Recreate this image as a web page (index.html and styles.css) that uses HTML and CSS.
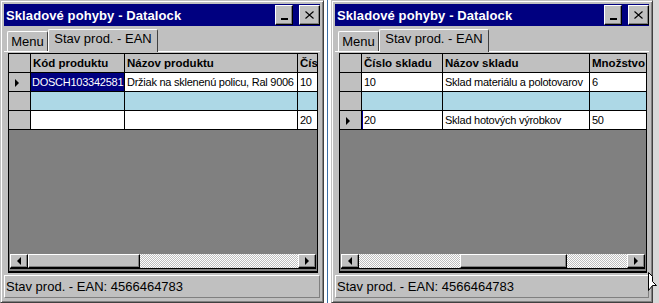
FILE: index.html
```html
<!DOCTYPE html>
<html lang="sk">
<head>
<meta charset="utf-8">
<link rel="stylesheet" href="styles.css">
</head>
<body>

<div class="desk">

<div class="win">
    <div class="title">
        <span class="caption">Skladové pohyby - Datalock</span>
        <div class="tbtn min"><span class="bar"></span></div>
        <div class="tbtn close">
            <svg width="9" height="8" viewBox="0 0 9 8"><path d="M0.5 0.5 L8.5 7.5 M8.5 0.5 L0.5 7.5" stroke="#000" stroke-width="1.1" fill="none"/></svg>
        </div>
    </div>
    <div class="tabs">
        <div class="tab menu">Menu</div>
        <div class="tab active">Stav prod. - EAN</div>
    </div>
    <div class="pane">
        <div class="grid">
            <div class="row head">
                <div class="cell rh"></div>
                <div class="cell w94">Kód produktu</div>
                <div class="cell w173">Názov produktu</div>
                <div class="cell w60">Číslo skladu</div>
            </div>
            <div class="row">
                <div class="cell rh"><span class="arrow"></span></div>
                <div class="cell w94 sel">DOSCH103342581</div>
                <div class="cell w173">Držiak na sklenenú policu, Ral 9006</div>
                <div class="cell w60">10</div>
            </div>
            <div class="row alt">
                <div class="cell rh"></div>
                <div class="cell w94"></div>
                <div class="cell w173"></div>
                <div class="cell w60"></div>
            </div>
            <div class="row">
                <div class="cell rh"></div>
                <div class="cell w94"></div>
                <div class="cell w173"></div>
                <div class="cell w60">20</div>
            </div>
            <div class="fill"></div>
            <div class="hscroll">
                <div class="sbtn"><span class="tri left"></span></div>
                <div class="thumb t1"></div>
                <div class="track"></div>
                <div class="sbtn"><span class="tri right"></span></div>
            </div>
        </div>
    </div>
    <div class="status">Stav prod. - EAN: 4566464783</div>
</div>

<div class="sep"></div>

<div class="win narrow">
    <div class="title">
        <span class="caption">Skladové pohyby - Datalock</span>
        <div class="tbtn min"><span class="bar"></span></div>
        <div class="tbtn close">
            <svg width="9" height="8" viewBox="0 0 9 8"><path d="M0.5 0.5 L8.5 7.5 M8.5 0.5 L0.5 7.5" stroke="#000" stroke-width="1.1" fill="none"/></svg>
        </div>
    </div>
    <div class="tabs">
        <div class="tab menu">Menu</div>
        <div class="tab active">Stav prod. - EAN</div>
    </div>
    <div class="pane">
        <div class="grid">
            <div class="row head">
                <div class="cell rh"></div>
                <div class="cell w81">Číslo skladu</div>
                <div class="cell w147">Názov skladu</div>
                <div class="cell w60">Množstvo</div>
            </div>
            <div class="row">
                <div class="cell rh"></div>
                <div class="cell w81">10</div>
                <div class="cell w147">Sklad materiálu a polotovarov</div>
                <div class="cell w60">6</div>
            </div>
            <div class="row alt">
                <div class="cell rh"></div>
                <div class="cell w81"></div>
                <div class="cell w147"></div>
                <div class="cell w60"></div>
            </div>
            <div class="row">
                <div class="cell rh"><span class="arrow"></span></div>
                <div class="cell w81 caret">20</div>
                <div class="cell w147">Sklad hotových výrobkov</div>
                <div class="cell w60">50</div>
            </div>
            <div class="fill"></div>
            <div class="hscroll">
                <div class="sbtn"><span class="tri left"></span></div>
                <div class="track t2a"></div>
                <div class="thumb t2"></div>
                <div class="track"></div>
                <div class="sbtn"><span class="tri right"></span></div>
            </div>
        </div>
    </div>
    <div class="status">Stav prod. - EAN: 4566464783</div>
</div>

<div class="edge"></div>

</div>

<svg class="cursor" width="10" height="20" viewBox="0 0 10 20">
    <path d="M0.5 0.5 L4.5 4.5 L4.5 9.5 L8.5 13.5 L4.5 13.5 L0.5 18.5 Z" fill="#fff" stroke="#000" stroke-width="1"/>
</svg>

</body>
</html>
```

FILE: styles.css
```css
body
{
margin: 0;
background: #ffffff;
font-family: "Liberation Sans", Arial, sans-serif;
overflow: hidden;
}

.desk
{
display: flex;
height: 303px;
}

.sep
{
width: 7px;
flex: none;
background: linear-gradient(to right, #ffffff 3px, #3a6ea5 3px, #3a6ea5 4px, #ffffff 4px);
}

.edge
{
flex: 1;
background: #d8d8d8;
}

.win
{
width: 324px;
height: 303px;
flex: none;
box-sizing: border-box;
border: 1px solid #c0c0c0;
border-right-color: #404040;
border-bottom-color: #404040;
box-shadow: inset 1px 1px #ffffff, inset -1px -1px #808080;
padding: 3px 3px 4px 3px;
background: #c0c0c0;
display: flex;
flex-direction: column;
}

.win.narrow
{
width: 322px;
}

/* title bar */
.title
{
height: 22px;
flex: none;
background: #000080;
color: #ffffff;
font-weight: bold;
font-size: 13px;
display: flex;
align-items: center;
padding-left: 2px;
}

.caption
{
flex: 1;
letter-spacing: 0.1px;
}

.tbtn
{
width: 18px;
height: 20px;
box-sizing: border-box;
background: #c0c0c0;
border: 1px solid;
border-color: #ffffff #000000 #000000 #ffffff;
box-shadow: inset -1px -1px #808080;
display: flex;
align-items: center;
justify-content: center;
}

.tbtn.min
{
margin-right: 6px;
align-items: flex-end;
}

.tbtn .bar
{
width: 7px;
height: 2px;
background: #000000;
margin-bottom: 4px;
}

.tbtn.close
{
width: 21px;
}

/* tabs */
.tabs
{
height: 25px;
flex: none;
display: flex;
align-items: flex-end;
padding-left: 3px;
border-bottom: 1px solid #ffffff;
}

.tab
{
box-sizing: border-box;
border: 1px solid;
border-color: #ffffff #404040 transparent #ffffff;
border-bottom: none;
border-radius: 2px 2px 0 0;
font-size: 13px;
line-height: 14px;
text-align: center;
color: #000000;
background: #c0c0c0;
}

.tab.menu
{
width: 41px;
height: 20px;
padding-top: 3px;
}

.tab.active
{
width: 110px;
height: 23px;
padding-top: 2px;
margin-bottom: -1px;
}

/* grid */
.pane
{
flex: 1;
display: flex;
padding: 1px 2px 0 4px;
}

.grid
{
flex: 1;
border: 1px solid #000000;
border-bottom-width: 2px;
background: #808080;
display: flex;
flex-direction: column;
overflow: hidden;
}

.row
{
display: flex;
height: 19px;
flex: none;
box-sizing: border-box;
border-bottom: 1px solid #000000;
background: #ffffff;
}

.row.head
{
background: #c0c0c0;
font-weight: bold;
}

.row.alt
{
background: #add8e6;
}

.cell
{
flex: none;
box-sizing: border-box;
border-right: 1px solid #000000;
font-size: 11px;
line-height: 18px;
letter-spacing: -0.25px;
padding-left: 2px;
white-space: nowrap;
overflow: hidden;
color: #000000;
}

.row.head .cell
{
font-size: 11.5px;
letter-spacing: 0;
line-height: 19px;
}

.cell.rh
{
width: 22px;
background: #c0c0c0;
padding: 6px 0 0 6px;
}

.arrow
{
display: block;
width: 0;
height: 0;
border-left: 4px solid #000000;
border-top: 4px solid transparent;
border-bottom: 4px solid transparent;
}

.w94 { width: 94px; }
.w173 { width: 173px; }
.w81 { width: 81px; }
.w147 { width: 147px; }
.w60 { width: 60px; }

.cell.sel
{
background: #000080;
color: #ffffff;
padding-left: 1px;
}

.cell.caret
{
box-shadow: inset 1px 0 #0000a0;
}

.fill
{
flex: 1;
}

/* scrollbar */
.hscroll
{
height: 14px;
flex: none;
display: flex;
margin: 0 1px 2px 1px;
border-bottom: 1px solid #000000;
}

.sbtn,
.thumb
{
box-sizing: border-box;
background: #c0c0c0;
border: 1px solid;
border-color: #ffffff #000000 #000000 #ffffff;
box-shadow: inset -1px -1px #808080;
}

.sbtn
{
width: 18px;
display: flex;
align-items: center;
justify-content: center;
}

.tri
{
width: 0;
height: 0;
border-top: 4px solid transparent;
border-bottom: 4px solid transparent;
}

.tri.left
{
border-right: 4px solid #000000;
}

.tri.right
{
border-left: 4px solid #000000;
}

.track
{
flex: 1;
background: repeating-conic-gradient(#c0c0c0 0 25%, #ffffff 0 50%) 0 0 / 2px 2px;
}

.thumb.t1 { width: 112px; }
.track.t2a { flex: none; width: 101px; }
.thumb.t2 { width: 107px; }

/* status bar */
.status
{
height: 23px;
flex: none;
box-sizing: border-box;
margin-top: 2px;
border: 1px solid;
border-color: #ffffff #808080 #808080 #ffffff;
font-size: 13px;
line-height: 21px;
padding-left: 1px;
color: #000000;
}

.cursor
{
position: absolute;
left: 648px;
top: 272px;
}
```
